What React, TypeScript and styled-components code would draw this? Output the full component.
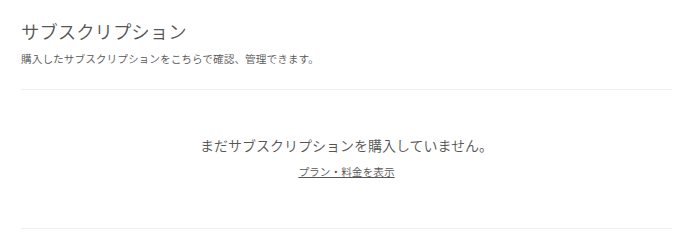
import styled, { createGlobalStyle } from "styled-components";

const GlobalStyle = createGlobalStyle`
  body {
    margin: 0;
    background: #ffffff;
    font-family: "Noto Sans CJK JP", "Noto Sans", sans-serif;
    color: #555555;
  }
`;

const Page = styled.div`
  padding: 0 28px 0 21px;
`;

const Header = styled.header`
  padding-top: 17px;
  padding-bottom: 22px;
  border-bottom: 1px solid #efefef;
`;

const Title = styled.h1`
  margin: 0;
  font-size: 18.4px;
  line-height: 28px;
  font-weight: 350;
  color: #555555;
`;

const Description = styled.p`
  margin: 6px 0 0;
  font-size: 10.7px;
  line-height: 16px;
  font-weight: 350;
  color: #555555;
`;

const EmptyState = styled.section`
  display: flex;
  flex-direction: column;
  align-items: center;
  gap: 9px;
  padding: 45px 0 48px;
  border-bottom: 1px solid #efefef;
`;

const EmptyMessage = styled.p`
  margin: 0;
  font-size: 14px;
  line-height: 20px;
  font-weight: 350;
  color: #555555;
`;

const PlanLink = styled.a`
  font-size: 10.7px;
  line-height: 16px;
  font-weight: 350;
  color: #555555;
  text-decoration: underline;
  cursor: pointer;
`;

export default function App() {
  return (
    <>
      <GlobalStyle />
      <Page>
        <Header>
          <Title>サブスクリプション</Title>
          <Description>
            購入したサブスクリプションをこちらで確認、管理できます。
          </Description>
        </Header>
        <EmptyState>
          <EmptyMessage>まだサブスクリプションを購入していません。</EmptyMessage>
          <PlanLink>プラン・料金を表示</PlanLink>
        </EmptyState>
      </Page>
    </>
  );
}
